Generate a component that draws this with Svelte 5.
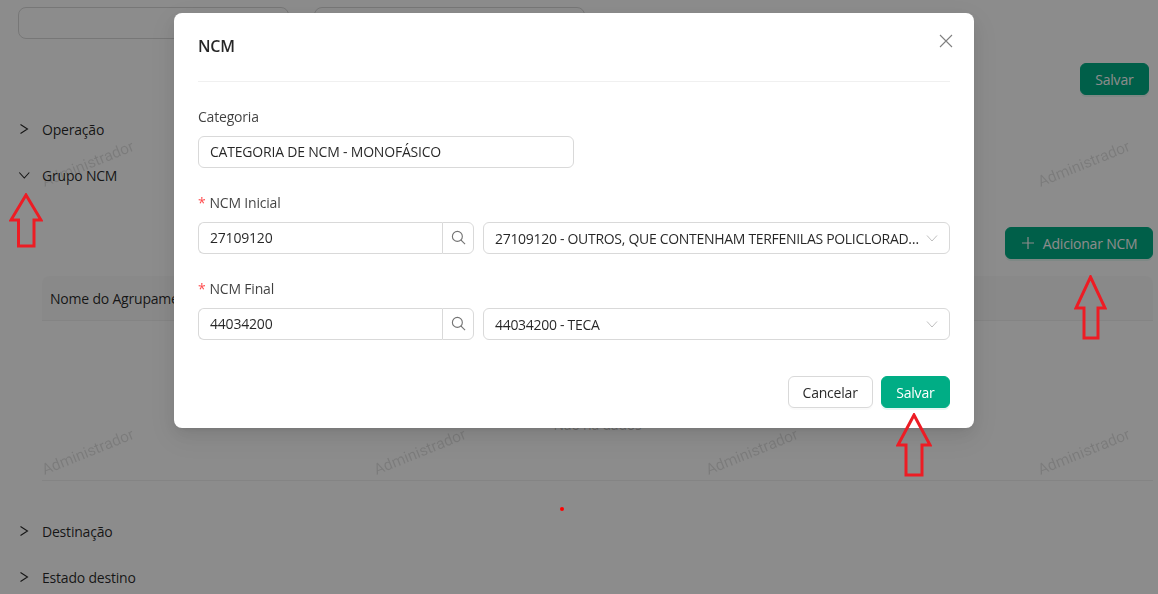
<script>
  const watermarks = Array.from({ length: 8 });
  // annotation arrows: box, shoulder height and stem edges
  const arrows = [
    { x: 9, y: 193, w: 34, h: 55, s: 27, l: 9.5, r: 25 },
    { x: 1074, y: 275, w: 33, h: 65, s: 33, l: 10, r: 24 },
    { x: 896, y: 413, w: 36, h: 64, s: 32, l: 10, r: 26 }
  ];
  const arrowPath = (a) =>
    `M${a.w / 2} 2L${a.w - 2} ${a.s}H${a.r}V${a.h - 2}H${a.l}V${a.s}H2Z`;
</script>

<div class="page">
  <div class="filters">
    <div class="filter"></div>
    <div class="filter"></div>
  </div>
  <div class="actions">
    <button class="btn primary">Salvar</button>
  </div>

  <div class="panel">
    <svg class="chev" viewBox="0 0 10 10"><path d="M2.500.5L9.500 5 2.500 9.500" /></svg>
    <span>Operação</span>
  </div>
  <div class="panel">
    <svg class="chev" viewBox="0 0 10 10"><path d="M1.300 2.500L6.300 8 11.300 2.500" /></svg>
    <span>Grupo NCM</span>
  </div>
  <div class="panel-body">
    <div class="add-row">
      <button class="btn primary add">
        <svg viewBox="0 0 14 14"><path d="M7 1v12M1 7h12" /></svg>
        Adicionar NCM
      </button>
    </div>
    <div class="table-head">Nome do Agrupamento</div>
    <div class="table-empty">Não há dados</div>
  </div>
  <div class="panel">
    <svg class="chev" viewBox="0 0 10 10"><path d="M2.500.5L9.500 5 2.500 9.500" /></svg>
    <span>Destinação</span>
  </div>
  <div class="panel last">
    <svg class="chev" viewBox="0 0 10 10"><path d="M2.500.5L9.500 5 2.500 9.500" /></svg>
    <span>Estado destino</span>
  </div>
</div>

<div class="watermarks">
  {#each watermarks as _}
    <div class="mark"><span>Administrador</span></div>
  {/each}
</div>

<div class="mask">
  <div class="modal">
    <div class="modal-head">
      <h2>NCM</h2>
      <svg class="close" viewBox="0 0 14 14"><path d="M1 1l12 12M13 1L1 13" /></svg>
    </div>

    <div class="field">
      <label>Categoria</label>
      <div class="input category">CATEGORIA DE NCM - MONOFÁSICO</div>
    </div>

    <div class="field">
      <label><i>*</i>NCM Inicial</label>
      <div class="ncm-row">
        <div class="group">
          <div class="input">27109120</div>
          <div class="addon">
            <svg viewBox="0 0 16 16"><circle cx="6.800" cy="6.800" r="5.300" /><path d="M10.700 10.700L15 15" /></svg>
          </div>
        </div>
        <div class="select">
          <span>27109120 - OUTROS, QUE CONTENHAM TERFENILAS POLICLORADOS</span>
          <svg viewBox="0 0 12 12"><path d="M1 3.500l5 5.500 5-5.500" /></svg>
        </div>
      </div>
    </div>

    <div class="field">
      <label><i>*</i>NCM Final</label>
      <div class="ncm-row">
        <div class="group">
          <div class="input">44034200</div>
          <div class="addon">
            <svg viewBox="0 0 16 16"><circle cx="6.800" cy="6.800" r="5.300" /><path d="M10.700 10.700L15 15" /></svg>
          </div>
        </div>
        <div class="select">
          <span>44034200 - TECA</span>
          <svg viewBox="0 0 12 12"><path d="M1 3.500l5 5.500 5-5.500" /></svg>
        </div>
      </div>
    </div>

    <div class="modal-foot">
      <button class="btn cancel">Cancelar</button>
      <button class="btn primary">Salvar</button>
    </div>
  </div>
</div>

<!-- annotations drawn on top of the screenshot -->
{#each arrows as a}
  <svg
    class="arrow"
    style="left: {a.x}px; top: {a.y}px; width: {a.w}px; height: {a.h}px"
    viewBox="0 0 {a.w} {a.h}"
  >
    <path d={arrowPath(a)} />
  </svg>
{/each}
<div class="dot"></div>

<style>
  :global(body) {
    margin: 0;
    background: #fff;
    font-family: "Open Sans", "Noto Sans", sans-serif;
    font-size: 14px;
    letter-spacing: -0.2px;
    color: rgba(0, 0, 0, 0.85);
    overflow: hidden;
  }

  .page {
    height: 594px;
    overflow: hidden;
    box-sizing: border-box;
    padding: 7px 5px 0 18px;
  }

  .filters {
    display: flex;
    gap: 25px;
  }

  .filter {
    width: 271px;
    height: 32px;
    box-sizing: border-box;
    border: 1px solid #d9d9d9;
    border-radius: 8px;
  }

  .actions {
    display: flex;
    justify-content: flex-end;
    margin: 24px 4px 12px 0;
  }

  .btn {
    height: 32px;
    padding: 0 15px;
    border: 1px solid #d9d9d9;
    border-radius: 6px;
    background: #fff;
    font: inherit;
    letter-spacing: inherit;
    color: rgba(0, 0, 0, 0.85);
    box-shadow: 0 2px 0 rgba(0, 0, 0, 0.02);
  }

  .cancel {
    padding: 0 14px;
  }

  .primary {
    padding: 0 14.5px;
    background: #00ad85;
    border-color: #00ad85;
    color: #fff;
    box-shadow: 0 2px 0 rgba(0, 173, 133, 0.1);
  }

  .panel {
    height: 46px;
    box-sizing: border-box;
    padding-bottom: 2px;
    display: flex;
    align-items: center;
    gap: 14px;
    font-weight: 500;
  }

  .chev {
    width: 10px;
    height: 10px;
    flex: none;
    fill: none;
    overflow: visible;
    stroke: rgba(0, 0, 0, 0.85);
    stroke-width: 1.1;
  }

  .panel-body {
    margin-left: 24px;
    height: 310px;
    box-sizing: border-box;
    padding-top: 28px;
  }

  .add-row {
    display: flex;
    justify-content: flex-end;
    margin-bottom: 17px;
  }

  .add {
    display: flex;
    align-items: center;
    gap: 8px;
  }

  .add svg {
    width: 14px;
    height: 14px;
    fill: none;
    stroke: #fff;
    stroke-width: 1.2;
  }

  .table-head {
    height: 45px;
    line-height: 45px;
    padding-left: 8px;
    background: #fafafa;
    border-bottom: 1px solid #f0f0f0;
    border-radius: 8px 8px 0 0;
    font-weight: 500;
    box-sizing: border-box;
  }

  .table-empty {
    height: 160px;
    box-sizing: border-box;
    padding-top: 94px;
    text-align: center;
    color: rgba(0, 0, 0, 0.25);
    border-bottom: 1px solid #f0f0f0;
  }

  .watermarks {
    position: fixed;
    inset: 0;
    overflow: hidden;
    box-sizing: border-box;
    padding: 20px 0 0 39px;
    display: grid;
    grid-template-columns: repeat(4, 332px);
    grid-auto-rows: 288px;
    pointer-events: none;
  }

  .mark {
    height: 288px;
    display: flex;
    align-items: center;
  }

  .mark span {
    display: block;
    font-family: "Roboto", sans-serif;
    font-size: 15.5px;
    letter-spacing: 0;
    color: rgba(0, 0, 0, 0.12);
    transform: rotate(-22deg);
  }

  .mask {
    position: fixed;
    inset: 0;
    background: rgba(0, 0, 0, 0.45);
  }

  .modal {
    position: absolute;
    left: 174px;
    top: 13px;
    width: 800px;
    height: 415px;
    box-sizing: border-box;
    padding: 0 24px;
    background: #fff;
    border-radius: 8px;
    box-shadow:
      0 6px 16px rgba(0, 0, 0, 0.08),
      0 3px 6px -4px rgba(0, 0, 0, 0.12),
      0 9px 28px 8px rgba(0, 0, 0, 0.05);
  }

  .modal-head {
    height: 69px;
    display: flex;
    justify-content: space-between;
    align-items: center;
    border-bottom: 1px solid #f0f0f0;
    margin-bottom: 24px;
    padding-bottom: 2px;
    box-sizing: border-box;
  }

  h2 {
    margin: 0;
    font-size: 16px;
    font-weight: 600;
    line-height: 24px;
  }

  .close {
    width: 14px;
    height: 14px;
    margin-right: -3px;
    margin-top: -10px;
    fill: none;
    stroke: rgba(0, 0, 0, 0.5);
    stroke-width: 1.1;
  }

  .field {
    margin-bottom: 24px;
  }

  label {
    display: block;
    height: 22px;
    line-height: 22px;
    margin-bottom: 8px;
    color: rgba(0, 0, 0, 0.75);
  }

  label i {
    color: #ff4d4f;
    font-style: normal;
    margin-right: 4px;
  }

  .input {
    height: 32px;
    line-height: 30px;
    padding: 0 11px;
    box-sizing: border-box;
    border: 1px solid #d9d9d9;
    border-radius: 6px;
    flex: 1;
  }

  .category {
    width: 376px;
  }

  .ncm-row {
    display: flex;
    gap: 9px;
  }

  .group {
    width: 276px;
    display: flex;
    flex: none;
  }

  .group .input {
    border-radius: 6px 0 0 6px;
    border-right: 0;
  }

  .addon {
    width: 32px;
    height: 32px;
    box-sizing: border-box;
    border: 1px solid #d9d9d9;
    border-radius: 0 6px 6px 0;
    display: flex;
    align-items: center;
    justify-content: center;
    padding-bottom: 2px;
  }

  .addon svg {
    width: 15px;
    height: 15px;
    fill: none;
    stroke: rgba(0, 0, 0, 0.55);
    stroke-width: 1.2;
  }

  .select {
    flex: 1;
    min-width: 0;
    height: 32px;
    box-sizing: border-box;
    padding: 0 11px;
    border: 1px solid #d9d9d9;
    border-radius: 6px;
    display: flex;
    align-items: center;
    gap: 4px;
  }

  .select span {
    flex: 1;
    min-width: 0;
    letter-spacing: -0.3px;
    white-space: nowrap;
    overflow: hidden;
    text-overflow: ellipsis;
  }

  .select svg {
    width: 12px;
    height: 12px;
    flex: none;
    fill: none;
    stroke: rgba(0, 0, 0, 0.25);
    stroke-width: 1;
  }

  .modal-foot {
    display: flex;
    justify-content: flex-end;
    gap: 8px;
    margin-top: 36px;
  }

  .arrow {
    position: fixed;
    fill: none;
    stroke: #ed1c24;
    stroke-width: 3;
  }

  .dot {
    position: fixed;
    left: 560px;
    top: 507px;
    width: 4px;
    height: 4px;
    border-radius: 50%;
    background: #f00;
  }
</style>
